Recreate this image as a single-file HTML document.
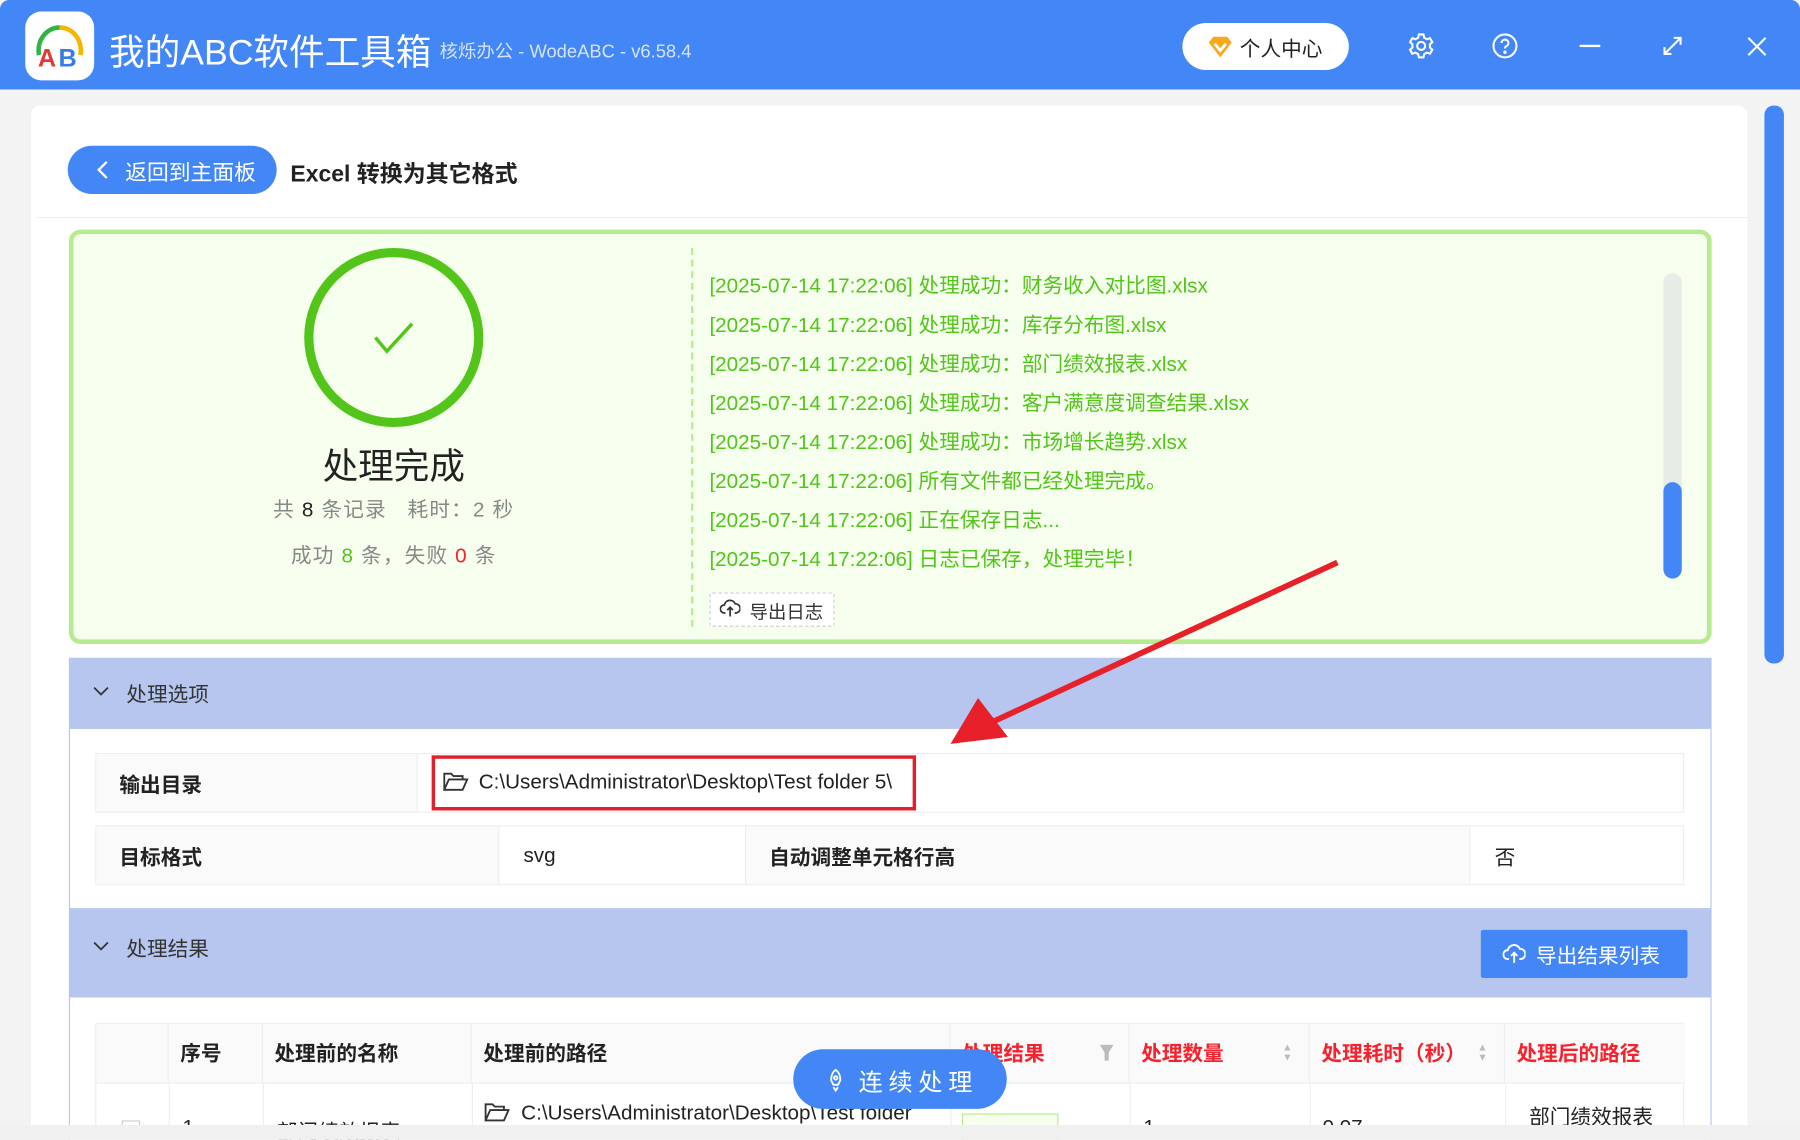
<!DOCTYPE html>
<html><head><meta charset="utf-8"><style>
*{margin:0;padding:0;box-sizing:border-box}
html,body{width:1800px;height:1140px;overflow:hidden;background:#fff}
#w{position:absolute;left:0;top:0;width:1568px;height:993px;transform:scale(1.147959);transform-origin:0 0;font-family:"Liberation Sans","Noto Sans CJK SC",sans-serif;background:#f3f3f3;overflow:hidden}
.a{position:absolute}
.log{position:absolute;left:618px;font-size:18px;color:#52c41a;white-space:nowrap}
.th{position:absolute;top:0;height:52px;line-height:52px;font-weight:bold;font-size:18px;color:#222;border-right:1px solid #eee;padding-left:10px}
</style></head><body><div id="w">
<div class="a" style="left:0;top:0;width:1568px;height:78px;background:#4386f5;border-radius:8px 8px 0 0"></div>
<div class="a" style="left:22px;top:10px;width:60px;height:60px;background:#fff;border-radius:14px"></div>
<svg class="a" style="left:22px;top:10px" width="60" height="60" viewBox="0 0 60 60">
<path d="M12 38 A18 20 0 0 1 30 14" stroke="#2fb344" stroke-width="4" fill="none"/>
<path d="M30 14 A18 20 0 0 1 48 38" stroke="#f7b500" stroke-width="4" fill="none"/>
<text x="11" y="48" font-size="22" font-weight="bold" fill="#e53935" font-family="Liberation Sans">A</text>
<text x="29" y="48" font-size="22" font-weight="bold" fill="#3a7bea" font-family="Liberation Sans">B</text></svg>
<div class="a" style="left:95px;top:20px;font-size:31px;color:#fff;white-space:nowrap">我的ABC软件工具箱</div>
<div class="a" style="left:383px;top:31px;font-size:16px;color:#d6e3fb;white-space:nowrap">核烁办公 - WodeABC - v6.58.4</div>
<div class="a" style="left:1030px;top:20px;width:145px;height:41px;background:#fff;border-radius:21px"></div>
<svg class="a" style="left:1051px;top:30px" width="24" height="22" viewBox="0 0 24 22"><path d="M2 7 L6 2 H18 L22 7 L12 20 Z" fill="#f7a81b"/><path d="M7 8 L12 14 L17 8" stroke="#fff" stroke-width="2.5" fill="none"/></svg>
<div class="a" style="left:1080px;top:29px;font-size:18px;color:#222">个人中心</div>
<svg class="a" style="left:1226px;top:28px" width="24" height="24" viewBox="0 0 24 24" fill="none" stroke="#fff" stroke-width="1.8"><circle cx="12" cy="12" r="3.5"/><path d="M10 2h4l.6 2.8 2.4 1.4 2.7-1 2 3.5-2.1 1.9v2.8l2.1 1.9-2 3.5-2.7-1-2.4 1.4L14 22h-4l-.6-2.8-2.4-1.4-2.7 1-2-3.5 2.1-1.9v-2.8L2.3 8.7l2-3.5 2.7 1 2.4-1.4z"/></svg>
<svg class="a" style="left:1299px;top:28px" width="24" height="24" viewBox="0 0 24 24" fill="none" stroke="#fff" stroke-width="1.8"><circle cx="12" cy="12" r="10"/><path d="M9 9.5a3 3 0 1 1 4 2.8c-.8.4-1 1-1 1.9"/><circle cx="12" cy="17.5" r=".6" fill="#fff"/></svg>
<div class="a" style="left:1376px;top:39px;width:18px;height:2px;background:#fff"></div>
<svg class="a" style="left:1448px;top:31px" width="18" height="18" viewBox="0 0 18 18" stroke="#fff" stroke-width="1.8" fill="none"><path d="M2 16L16 2M10 2h6v6M2 10v6h6"/></svg>
<svg class="a" style="left:1522px;top:32px" width="17" height="17" viewBox="0 0 17 17" stroke="#fff" stroke-width="1.8"><path d="M1 1L16 16M16 1L1 16"/></svg>
<div class="a" style="left:27px;top:92px;width:1495px;height:900px;background:#fff;border-radius:8px"></div>
<div class="a" style="left:32px;top:189px;width:1490px;height:1px;background:#eee"></div>
<div class="a" style="left:59px;top:127px;width:182px;height:42px;background:#4386f5;border-radius:21px"></div>
<svg class="a" style="left:83px;top:139px" width="12" height="18" viewBox="0 0 12 18"><path d="M10 2L3 9l7 7" stroke="#fff" stroke-width="2" fill="none"/></svg>
<div class="a" style="left:109px;top:136px;font-size:19px;color:#fff">返回到主面板</div>
<div class="a" style="left:253px;top:135px;font-size:20px;font-weight:bold;color:#222;white-space:nowrap">Excel 转换为其它格式</div>
<div class="a" style="left:60px;top:200px;width:1431px;height:361px;background:#f6ffed;border:4px solid #b7eb8f;border-radius:10px"></div>
<div class="a" style="left:265px;top:216px;width:156px;height:156px;border:8px solid #52c41a;border-radius:50%"></div>
<svg class="a" style="left:325px;top:280px" width="36" height="30" viewBox="0 0 36 30"><path d="M2 14l10 12L34 2" stroke="#52c41a" stroke-width="3" fill="none"/></svg>
<div class="a" style="left:243px;top:381px;width:200px;text-align:center;font-size:31px;color:#222">处理完成</div>
<div class="a" style="left:163px;top:430px;width:360px;text-align:center;font-size:18px;color:#888;white-space:pre;letter-spacing:1px">共 <span style="color:#222">8</span> 条记录   耗时：2 秒</div>
<div class="a" style="left:163px;top:470px;width:360px;text-align:center;font-size:18px;color:#888;white-space:pre;letter-spacing:1px">成功 <span style="color:#52c41a">8</span> 条，失败 <span style="color:#f5222d">0</span> 条</div>
<div class="a" style="left:602px;top:216px;height:330px;border-left:2px dashed #b7eb8f"></div>
<div class="log" style="top:235px">[2025-07-14 17:22:06] 处理成功：财务收入对比图.xlsx</div>
<div class="log" style="top:269px">[2025-07-14 17:22:06] 处理成功：库存分布图.xlsx</div>
<div class="log" style="top:303px">[2025-07-14 17:22:06] 处理成功：部门绩效报表.xlsx</div>
<div class="log" style="top:337px">[2025-07-14 17:22:06] 处理成功：客户满意度调查结果.xlsx</div>
<div class="log" style="top:371px">[2025-07-14 17:22:06] 处理成功：市场增长趋势.xlsx</div>
<div class="log" style="top:405px">[2025-07-14 17:22:06] 所有文件都已经处理完成。</div>
<div class="log" style="top:439px">[2025-07-14 17:22:06] 正在保存日志...</div>
<div class="log" style="top:473px">[2025-07-14 17:22:06] 日志已保存，处理完毕！</div>
<div class="a" style="left:618px;top:516px;width:109px;height:30px;background:#fff;border:1px dashed #ccc;border-radius:3px"></div>
<svg class="a" style="left:627px;top:522px" width="18" height="16" viewBox="0 0 18 16" fill="none" stroke="#333" stroke-width="1.5"><path d="M5 12H4a3.5 3.5 0 0 1 0-7 5 5 0 0 1 9.5-1A3.5 3.5 0 0 1 14 12h-1M9 7v8M6.5 9.5 9 7l2.5 2.5"/></svg>
<div class="a" style="left:653px;top:520px;font-size:16px;color:#333">导出日志</div>
<div class="a" style="left:1449px;top:238px;width:16px;height:266px;background:#e8ece6;border-radius:8px"></div>
<div class="a" style="left:1449px;top:420px;width:16px;height:84px;background:#4386f5;border-radius:8px"></div>
<div class="a" style="left:60px;top:573px;width:1431px;height:62px;background:#b6c6ee"></div>
<svg class="a" style="left:81px;top:597px" width="14" height="10" viewBox="0 0 14 10"><path d="M1 2l6 6 6-6" stroke="#333" stroke-width="1.5" fill="none"/></svg>
<div class="a" style="left:110px;top:591px;font-size:18px;color:#333">处理选项</div>
<div class="a" style="left:60px;top:635px;width:1431px;height:157px;background:#fff;border:1px solid #b6c6ee;border-top:0"></div>
<div class="a" style="left:83px;top:656px;width:1384px;height:52px;border:1px solid #eee"></div>
<div class="a" style="left:84px;top:657px;width:280px;height:50px;background:#fafafa;border-right:1px solid #eee"></div>
<div class="a" style="left:104px;top:670px;font-size:18px;font-weight:bold;color:#222">输出目录</div>
<div class="a" style="left:376px;top:658px;width:422px;height:48px;border:3px solid #e0202a"></div>
<svg class="a" style="left:386px;top:672px" width="22" height="18" viewBox="0 0 22 18" fill="none" stroke="#333" stroke-width="1.6"><path d="M1 16V2h6l2 2h8v3M1 16l4-9h16l-4 9z"/></svg>
<div class="a" style="left:417px;top:671px;font-size:18px;color:#222;white-space:nowrap">C:\Users\Administrator\Desktop\Test folder 5\</div>
<div class="a" style="left:83px;top:719px;width:1384px;height:52px;border:1px solid #eee"></div>
<div class="a" style="left:84px;top:720px;width:351px;height:50px;background:#fafafa;border-right:1px solid #eee"></div>
<div class="a" style="left:649px;top:720px;width:632px;height:50px;background:#fafafa;border-left:1px solid #eee;border-right:1px solid #eee"></div>
<div class="a" style="left:104px;top:733px;font-size:18px;font-weight:bold;color:#222">目标格式</div>
<div class="a" style="left:456px;top:735px;font-size:18px;color:#222">svg</div>
<div class="a" style="left:670px;top:733px;font-size:18px;font-weight:bold;color:#222">自动调整单元格行高</div>
<div class="a" style="left:1302px;top:733px;font-size:18px;color:#222">否</div>
<div class="a" style="left:60px;top:792px;width:1431px;height:77px;background:#b6c6ee"></div>
<svg class="a" style="left:81px;top:819px" width="14" height="10" viewBox="0 0 14 10"><path d="M1 2l6 6 6-6" stroke="#333" stroke-width="1.5" fill="none"/></svg>
<div class="a" style="left:110px;top:813px;font-size:18px;color:#333">处理结果</div>
<div class="a" style="left:1290px;top:810px;width:180px;height:42px;background:#4386f5;border-radius:2px"></div>
<svg class="a" style="left:1309px;top:822px" width="20" height="18" viewBox="0 0 18 16" fill="none" stroke="#fff" stroke-width="1.5"><path d="M5 12H4a3.5 3.5 0 0 1 0-7 5 5 0 0 1 9.5-1A3.5 3.5 0 0 1 14 12h-1M9 7v8M6.5 9.5 9 7l2.5 2.5"/></svg>
<div class="a" style="left:1338px;top:819px;font-size:18px;color:#fff">导出结果列表</div>
<div class="a" style="left:60px;top:869px;width:1431px;height:130px;background:#fff;border-left:1px solid #b6c6ee;border-right:1px solid #b6c6ee"></div>
<div class="a" style="left:83px;top:891px;width:1384px;height:110px;border:1px solid #eee">
<div class="a" style="left:0;top:0;width:1384px;height:52px;background:#fafafa;border-bottom:1px solid #eee"></div>
<div class="th" style="left:0;width:63px"></div>
<div class="th" style="left:63px;width:82px">序号</div>
<div class="th" style="left:145px;width:182px">处理前的名称</div>
<div class="th" style="left:327px;width:417px">处理前的路径</div>
<div class="th" style="left:744px;width:156px;color:#f5222d">处理结果</div>
<div class="th" style="left:900px;width:157px;color:#f5222d">处理数量</div>
<div class="th" style="left:1057px;width:170px;color:#f5222d">处理耗时（秒）</div>
<div class="th" style="left:1227px;width:157px;color:#f5222d;border-right:0">处理后的路径</div>
<div class="a" style="left:63px;top:52px;height:60px;border-left:1px solid #eee"></div>
<div class="a" style="left:145px;top:52px;height:60px;border-left:1px solid #eee"></div>
<div class="a" style="left:327px;top:52px;height:60px;border-left:1px solid #eee"></div>
<div class="a" style="left:744px;top:52px;height:60px;border-left:1px solid #eee"></div>
<div class="a" style="left:900px;top:52px;height:60px;border-left:1px solid #eee"></div>
<div class="a" style="left:1057px;top:52px;height:60px;border-left:1px solid #eee"></div>
<div class="a" style="left:1227px;top:52px;height:60px;border-left:1px solid #eee"></div>
<div class="a" style="left:22px;top:84px;width:16px;height:16px;border:1px solid #ccc;background:#fff"></div>
<div class="a" style="left:75px;top:80px;font-size:18px;color:#222">1</div>
<div class="a" style="left:157px;top:80px;font-size:18px;color:#222">部门绩效报表.x</div>
<svg class="a" style="left:338px;top:68px" width="22" height="18" viewBox="0 0 22 18" fill="none" stroke="#333" stroke-width="1.6"><path d="M1 16V2h6l2 2h8v3M1 16l4-9h16l-4 9z"/></svg>
<div class="a" style="left:370px;top:67px;font-size:18px;color:#222;white-space:nowrap;width:350px;overflow:hidden">C:\Users\Administrator\Desktop\Test folder</div>
<div class="a" style="left:754px;top:78px;width:84px;height:26px;background:#f6ffed;border:1px solid #b7eb8f"></div>
<div class="a" style="left:912px;top:80px;font-size:18px;color:#222">1</div>
<div class="a" style="left:1068px;top:80px;font-size:18px;color:#222">0.07</div>
<div class="a" style="left:1248px;top:67px;font-size:18px;color:#222">部门绩效报表_</div>
</div>
<div class="a" style="left:958px;top:910px;width:12px;height:14px;background:#bbb;clip-path:polygon(0 0,100% 0,65% 50%,65% 100%,35% 100%,35% 50%)"></div>
<div class="a" style="left:1117px;top:908px;color:#bbb;font-size:9px;line-height:9px">▲<br>▼</div>
<div class="a" style="left:1287px;top:908px;color:#bbb;font-size:9px;line-height:9px">▲<br>▼</div>
<div class="a" style="left:0;top:980px;width:1568px;height:13px;background:#f0f0f0"></div>
<div class="a" style="left:691px;top:914px;width:186px;height:52px;background:#4386f5;border-radius:26px"></div>
<svg class="a" style="left:719px;top:930px" width="18" height="22" viewBox="0 0 18 22" fill="none" stroke="#fff" stroke-width="1.6"><path d="M9 2c3 2 4 5 4 9l-2 4H7l-2-4c0-4 1-7 4-9zM7 17l2 3 2-3"/><circle cx="9" cy="9" r="1.5"/></svg>
<div class="a" style="left:748px;top:927px;font-size:21px;color:#fff;letter-spacing:5px">连续处理</div>
<div class="a" style="left:1537px;top:92px;width:17px;height:888px;background:#f3f3f3;border-radius:8px"></div>
<div class="a" style="left:1537px;top:92px;width:17px;height:486px;background:#4386f5;border-radius:8px"></div>
<svg class="a" style="left:0;top:0" width="1568" height="993"><path d="M1165 490 L862 630" stroke="#e8202a" stroke-width="5"/><polygon points="828,648 852,608 878,642" fill="#e8202a"/></svg>
</div></body></html>
